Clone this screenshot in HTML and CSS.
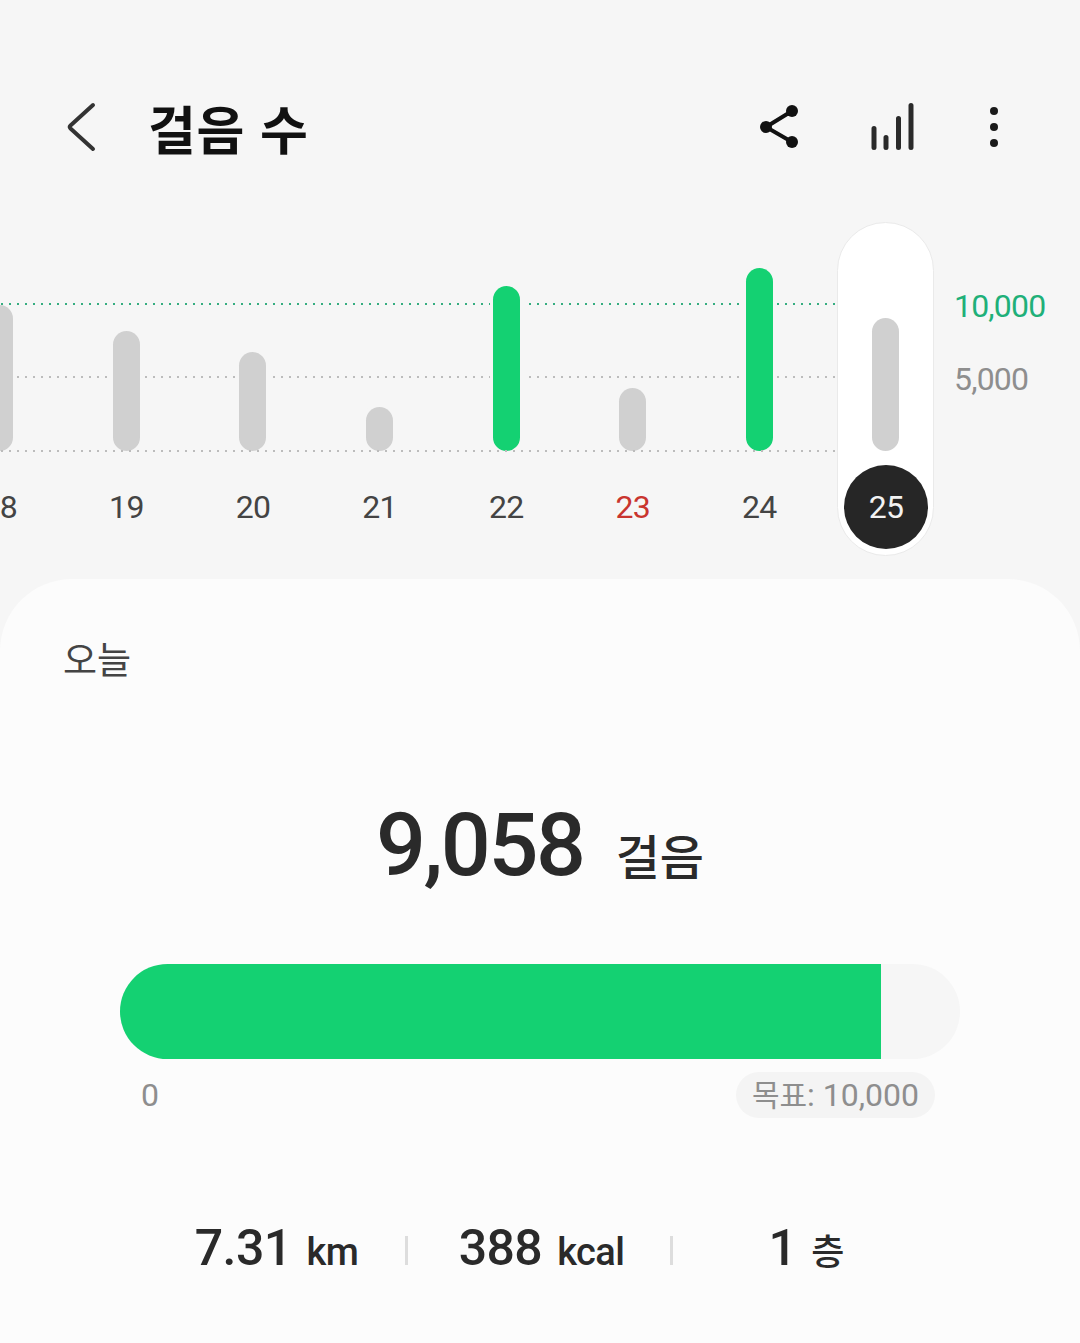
FILE: index.html
```html
<!DOCTYPE html>
<html lang="ko">
<head>
<meta charset="utf-8">
<title>걸음 수</title>
<link rel="stylesheet" href="styles.css">
</head>
<body>
<div class="screen">
  <header class="header">
    <svg class="icon icon-back" viewBox="0 0 44 60"><path d="M33 8 L10.500 28.500 Q9 30 10.500 31.500 L33 52" /></svg>
    <h1 class="title">걸음 수</h1>
    <svg class="icon icon-share" viewBox="0 0 60 60"><path d="M42 14 L16 30 L42 45" /><circle cx="42" cy="14" r="6" /><circle cx="16" cy="30" r="6" /><circle cx="42" cy="45" r="6" /></svg>
    <svg class="icon icon-bars" viewBox="0 0 60 60"><path d="M12 31.500 V50.500 M24 40.500 V50.500 M36.500 21.500 V50.500 M49 8.500 V50.500" /></svg>
    <svg class="icon icon-more" viewBox="0 0 60 60"><circle cx="30" cy="14" r="4" /><circle cx="30" cy="30" r="4" /><circle cx="30" cy="46" r="4" /></svg>
  </header>

  <section class="chart">
    <div class="grid-line grid-goal"></div>
    <div class="grid-line grid-mid"></div>
    <div class="selected-pill"></div>
    <div class="days">
      <div class="day"><div class="plot"><div class="bar" style="height:146px"></div></div><div class="day-label">18</div></div>
      <div class="day"><div class="plot"><div class="bar halo" style="height:120px"></div></div><div class="day-label">19</div></div>
      <div class="day"><div class="plot"><div class="bar halo" style="height:99px"></div></div><div class="day-label">20</div></div>
      <div class="day"><div class="plot"><div class="bar halo" style="height:44px"></div></div><div class="day-label">21</div></div>
      <div class="day"><div class="plot"><div class="bar halo goal" style="height:165px"></div></div><div class="day-label">22</div></div>
      <div class="day"><div class="plot"><div class="bar halo" style="height:63px"></div></div><div class="day-label holiday">23</div></div>
      <div class="day"><div class="plot"><div class="bar halo goal" style="height:183px"></div></div><div class="day-label">24</div></div>
      <div class="day"><div class="plot"><div class="bar" style="height:133px"></div></div><div class="day-label"><span class="today-badge">25</span></div></div>
    </div>
    <div class="grid-line grid-base"></div>
    <div class="axis-label axis-goal">10,000</div>
    <div class="axis-label axis-mid">5,000</div>
  </section>

  <main class="card">
    <div class="card-date">오늘</div>
    <div class="total">
      <span class="total-value">9,058</span>
      <span class="total-unit">걸음</span>
    </div>
    <div class="progress">
      <div class="progress-fill" style="width:761px"></div>
    </div>
    <div class="progress-scale">
      <span class="scale-zero">0</span>
      <span class="scale-goal"><span class="scale-goal-ko">목표</span>: 10,000</span>
    </div>
    <div class="stats">
      <div class="stat"><span class="stat-value">7.31</span><span class="stat-unit">km</span></div>
      <div class="stat"><span class="stat-value">388</span><span class="stat-unit">kcal</span></div>
      <div class="stat"><span class="stat-value">1</span><span class="stat-unit stat-unit-ko">층</span></div>
    </div>
  </main>
</div>
</body>
</html>
```
FILE: styles.css
```css
* { box-sizing: border-box; }

html, body {
  margin: 0;
  padding: 0;
  background: #f6f6f6;
}

body {
  font-family: Roboto, "Noto Sans CJK KR", sans-serif;
}

.screen {
  width: 1080px;
  height: 1343px;
  overflow: hidden;
  display: flex;
  flex-direction: column;
  padding-top: 80px;
}

/* Header */
.header {
  height: 94px;
  flex: none;
  display: flex;
  align-items: center;
  padding: 0 56px 0 60px;
}

.icon {
  width: 60px;
  height: 60px;
  flex: none;
}

.icon-back {
  width: 44px;
  fill: none;
  stroke: #333;
  stroke-width: 4;
  stroke-linecap: round;
  stroke-linejoin: round;
}

.title {
  margin: 0 0 0 44px;
  font-family: "Noto Sans CJK KR", sans-serif;
  font-size: 52px;
  font-weight: 700;
  letter-spacing: 0.6px;
  line-height: 60px;
  color: #111;
  position: relative;
  top: 1px;
}

.icon-share {
  margin-left: auto;
  fill: #111;
  stroke: #111;
  stroke-width: 4;
}

.icon-share path { fill: none; }
.icon-share circle { stroke: none; }

.icon-bars {
  margin-left: 52px;
  fill: none;
  stroke: #2a2a2a;
  stroke-width: 5;
  stroke-linecap: round;
}

.icon-more {
  margin-left: 42px;
  fill: #1a1a1a;
}

/* Chart */
.chart {
  position: relative;
  height: 405px;
  flex: none;
}

.grid-line {
  position: absolute;
  left: 0;
  width: 837px;
  height: 2px;
  background-size: 8px 2px;
  background-repeat: repeat-x;
}

.grid-goal {
  top: 129px;
  background-image: radial-gradient(circle at 2px 1px, #35ad80 1px, transparent 1.4px);
}

.grid-mid {
  top: 202px;
  background-image: radial-gradient(circle at 2px 1px, #bcbcbc 1px, transparent 1.4px);
}

.grid-base {
  top: 276px;
  background-image: radial-gradient(circle at 2px 1px, #bcbcbc 1px, transparent 1.4px);
}

.selected-pill {
  position: absolute;
  left: 837px;
  top: 48px;
  width: 97px;
  height: 334px;
  background: #fff;
  border: 1px solid #eaeaea;
  border-radius: 49px;
}

.days {
  position: relative;
  display: flex;
  margin-left: -63.5px;
}

.day {
  width: 126.6px;
  flex: none;
  display: flex;
  flex-direction: column;
  align-items: center;
}

.plot {
  height: 277px;
  display: flex;
  align-items: flex-end;
}

.bar {
  width: 27px;
  border-radius: 13.5px;
  background: #d0d0d0;
}

.bar.halo {
  box-shadow: 0 0 0 3px #f6f6f6;
}

.bar.goal {
  background: #14d172;
}

.day-label {
  height: 112px;
  display: flex;
  align-items: center;
  justify-content: center;
  font-size: 32px;
  letter-spacing: -0.7px;
  color: #444;
}

.day-label.holiday {
  color: #c9352f;
}

.today-badge {
  width: 84px;
  height: 84px;
  border-radius: 50%;
  background: #262626;
  color: #f2f2f2;
  display: flex;
  align-items: center;
  justify-content: center;
}

.axis-label {
  position: absolute;
  left: 954px;
  font-size: 32px;
  letter-spacing: -0.8px;
  line-height: 36px;
}

.axis-goal {
  top: 114px;
  color: #1fb079;
}

.axis-mid {
  top: 187px;
  color: #8e8e8e;
}

/* Card */
.card {
  flex: 1;
  background: #fcfcfc;
  border-radius: 72px 72px 0 0;
  padding: 54px 120px 0;
  display: flex;
  flex-direction: column;
}

.card-date {
  margin-left: -57px;
  font-family: "Noto Sans CJK KR", sans-serif;
  font-size: 37px;
  line-height: 50px;
  color: #444;
}

.total {
  margin-top: 112px;
  height: 100px;
  display: flex;
  align-items: baseline;
  justify-content: center;
  gap: 32px;
  color: #2a2a2a;
}

.total-value {
  font-size: 88px;
  font-weight: 500;
  letter-spacing: -2.4px;
  line-height: 100px;
}

.total-unit {
  font-family: "Noto Sans CJK KR", sans-serif;
  font-size: 48px;
  font-weight: 500;
}

.progress {
  margin-top: 69px;
  height: 95px;
  flex: none;
  background: #f6f6f6;
  border-radius: 48px;
  overflow: hidden;
}

.progress-fill {
  height: 100%;
  background: #14d172;
}

.progress-scale {
  margin-top: 13px;
  height: 46px;
  display: flex;
  align-items: center;
  justify-content: space-between;
  padding: 0 25px 0 21px;
  font-size: 32px;
  color: #8e8e8e;
}

.scale-goal {
  height: 46px;
  line-height: 43px;
  padding: 0 16px;
  border-radius: 23px;
  background: #f4f4f4;
}

.scale-goal-ko {
  font-family: "Noto Sans CJK KR", sans-serif;
  font-size: 30px;
}

.stats {
  margin: 100px 0 0 22px;
  display: flex;
}

.stat {
  width: 265px;
  height: 60px;
  flex: none;
  position: relative;
  display: flex;
  align-items: baseline;
  justify-content: center;
  gap: 15px;
  padding-left: 4px;
  color: #2a2a2a;
}

.stat + .stat::before {
  content: "";
  position: absolute;
  left: -2px;
  top: 18px;
  width: 3px;
  height: 29px;
  background: #dddddd;
}

.stat-value {
  font-size: 50px;
  font-weight: 500;
  letter-spacing: -0.6px;
  line-height: 60px;
}

.stat-unit {
  font-size: 38px;
  font-weight: 500;
  letter-spacing: -0.6px;
}

.stat-unit-ko {
  font-family: "Noto Sans CJK KR", sans-serif;
  font-size: 36px;
  letter-spacing: 0;
}
```
